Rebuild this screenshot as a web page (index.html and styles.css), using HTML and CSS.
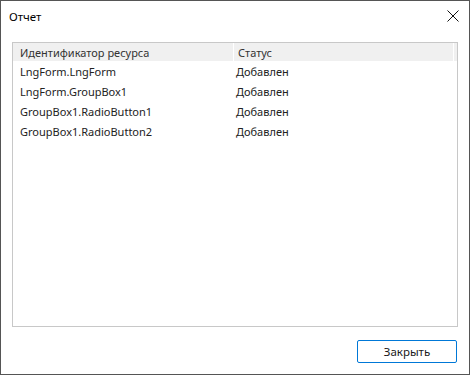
FILE: index.html
```html
<!DOCTYPE html>
<html lang="ru">
<head>
    <meta charset="UTF-8">
    <meta name="viewport" content="width=device-width, initial-scale=1.0">
    <title>Отчет</title>
    <link rel="stylesheet" href="styles.css">
</head>
<body>
    <div class="dialog">
        <div class="titlebar">
            <div class="title">Отчет</div>
            <div class="close">
                <svg width="12" height="12" viewBox="0 0 12 12">
                    <path d="M0.5 0.5 L11.5 11.5 M11.5 0.5 L0.5 11.5" stroke="#111" stroke-width="1" fill="none"/>
                </svg>
            </div>
        </div>
        <div class="content">
            <div class="list">
                <div class="head">
                    <div class="col col-id">Идентификатор ресурса</div>
                    <div class="col col-status">Статус</div>
                    <div class="col col-fill"></div>
                </div>
                <div class="row"><div class="cell cell-id">LngForm.LngForm</div><div class="cell cell-status">Добавлен</div></div>
                <div class="row"><div class="cell cell-id">LngForm.GroupBox1</div><div class="cell cell-status">Добавлен</div></div>
                <div class="row"><div class="cell cell-id">GroupBox1.RadioButton1</div><div class="cell cell-status">Добавлен</div></div>
                <div class="row"><div class="cell cell-id">GroupBox1.RadioButton2</div><div class="cell cell-status">Добавлен</div></div>
            </div>
        </div>
        <div class="footer">
            <button class="btn">Закрыть</button>
        </div>
    </div>
</body>
</html>
```

FILE: styles.css
```css
body {
    margin: 0;
    font-family: "Noto Sans", "Open Sans", sans-serif;
    font-size: 11px;
    color: #1a1a1a;
    background-color: #fff;
}
.dialog {
    width: 470px;
    height: 375px;
    box-sizing: border-box;
    border: 1px solid #555;
    display: flex;
    flex-direction: column;
    background-color: #fff;
}
.titlebar {
    height: 30px;
    display: flex;
    align-items: center;
    justify-content: space-between;
    padding: 0 10px 0 8px;
}
.title {
    font-size: 11.5px;
    color: #000;
}
.close {
    width: 12px;
    height: 12px;
    display: flex;
}
.content {
    padding: 11px 11px 0 11px;
}
.list {
    height: 285px;
    box-sizing: border-box;
    border: 1px solid #c8c8c8;
    background-color: #fff;
}
.head {
    display: flex;
    height: 18px;
}
.col {
    background-color: #f0f0f0;
    color: #333;
    display: flex;
    align-items: center;
    padding-left: 7px;
    box-sizing: border-box;
}
.col-id {
    width: 220px;
    margin-right: 1px;
}
.col-status {
    width: 219px;
    margin-right: 1px;
    padding-left: 4px;
}
.col-fill {
    width: 3px;
    padding: 0;
}
.row {
    display: flex;
    height: 20px;
    align-items: center;
}
.cell {
    padding-left: 7px;
    color: #222;
}
.cell-id {
    width: 221px;
    box-sizing: border-box;
}
.cell.cell-status {
    padding-left: 2px;
}
.footer {
    display: flex;
    justify-content: flex-end;
    padding: 13px 12px 0 0;
}
.btn {
    width: 100px;
    height: 23px;
    font-family: inherit;
    font-size: 11.5px;
    color: #1a1a1a;
    background-color: #fff;
    border: 1px solid #0078d7;
    border-radius: 2px;
    padding: 0;
}
```
